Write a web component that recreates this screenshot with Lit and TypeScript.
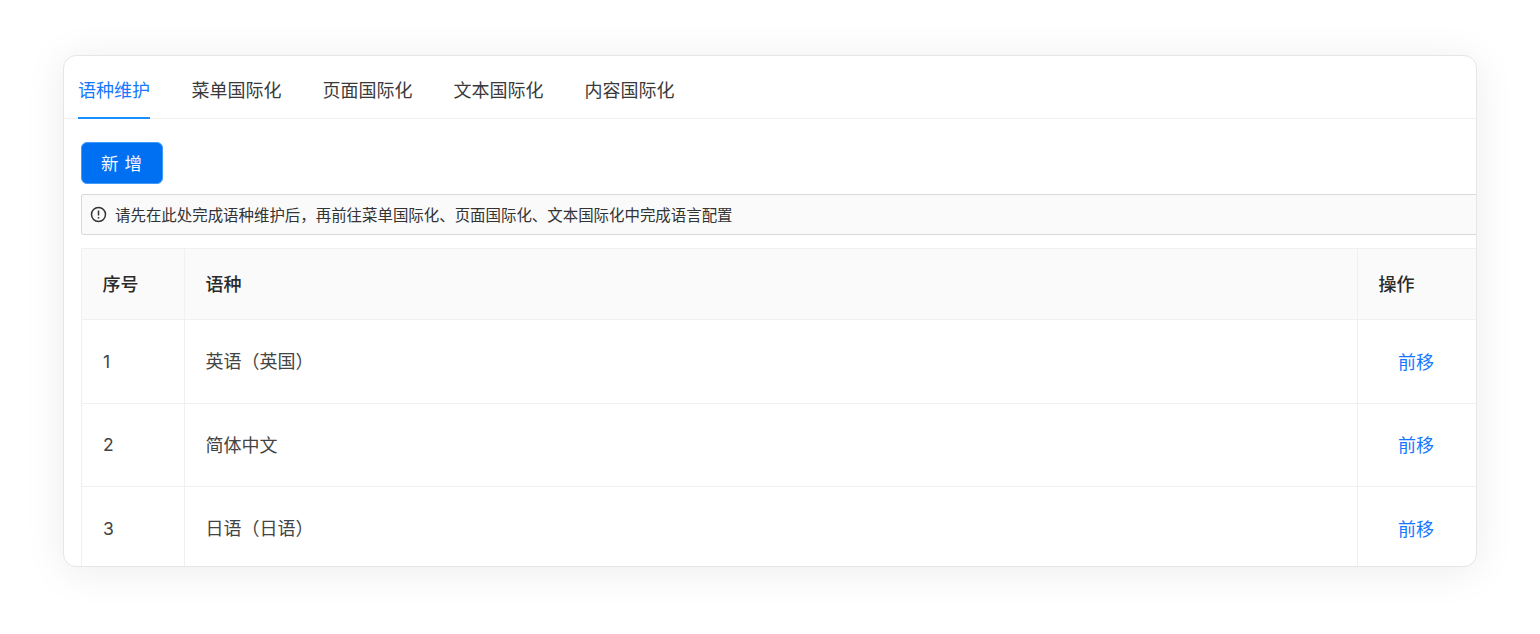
import { LitElement, html, css } from "lit";
import { customElement } from "lit/decorators.js";

@customElement("app-root")
export class AppRoot extends LitElement {
  static styles = css`
    :host {
      display: block;
      width: 1540px;
      height: 634px;
      background: #fff;
      box-sizing: border-box;
      padding: 55px 63px 67px 63px;
      font-family: "Noto Sans CJK SC", sans-serif;
      overflow: hidden;
    }
    .card {
      height: 512px;
      box-sizing: border-box;
      background: #fff;
      border: 1px solid #e6e6e6;
      border-radius: 13px;
      box-shadow: 0 4px 40px rgba(0, 0, 0, 0.08);
      overflow: hidden;
      display: flex;
      flex-direction: column;
    }
    .tabs {
      display: flex;
      gap: 41px;
      height: 63px;
      flex: none;
      box-sizing: border-box;
      padding-left: 14px;
      border-bottom: 1px solid #f0f0f0;
    }
    .tab {
      height: 63px;
      box-sizing: border-box;
      padding-top: 19px;
      line-height: 28px;
      font-size: 18px;
      color: #3a3a3a;
    }
    .tab.active {
      color: #1677ff;
      border-bottom: 2px solid #1890ff;
      margin-right: 0.5px;
    }
    .body {
      padding: 23px 0 0 17px;
      width: 1440px;
    }
    .btn {
      width: 82px;
      height: 42px;
      box-sizing: border-box;
      display: flex;
      align-items: center;
      justify-content: center;
      background: #0070f3;
      border: 1px solid #3f9bff;
      border-radius: 6px;
      color: #f2f7ff;
      font-size: 17.5px;
      line-height: 24px;
      letter-spacing: 6px;
      padding-left: 5px;
    }
    .alert {
      margin-top: 10px;
      height: 41px;
      box-sizing: border-box;
      display: flex;
      align-items: center;
      gap: 8px;
      padding-left: 8px;
      background: #fafafa;
      border: 1px solid #d9d9d9;
      border-radius: 2px;
      color: #333;
      font-size: 15.45px;
      line-height: 20px;
    }
    .alert svg {
      flex: none;
      display: block;
    }
    .alert span {
      padding-bottom: 2px;
    }
    .table {
      margin-top: 13px;
      border: 1px solid #f0f0f0;
      border-bottom: none;
      display: grid;
      grid-template-columns: 103px 1173px 1fr;
      grid-template-rows: 71px repeat(3, 83.6px);
      font-size: 18px;
      line-height: 24px;
      color: #444;
    }
    .cell {
      display: flex;
      align-items: center;
      box-sizing: border-box;
      padding-left: 20.6px;
      padding-bottom: 2px;
      border-bottom: 1px solid #f0f0f0;
      border-right: 1px solid #f0f0f0;
    }
    .cell:nth-child(3n) {
      border-right: none;
    }
    .head {
      background: #fafafa;
      color: #2a2a2a;
      font-weight: 500;
    }
    .num {
      font-family: Inter, sans-serif;
      font-size: 17.5px;
      padding-left: 21px;
      padding-top: 1px;
      padding-bottom: 0;
    }
    .act {
      color: #1677ff;
      padding-left: 40px;
      padding-bottom: 1px;
    }
  `;

  render() {
    const tabs = ["语种维护", "菜单国际化", "页面国际化", "文本国际化", "内容国际化"];
    const rows = [
      ["1", "英语（英国）"],
      ["2", "简体中文"],
      ["3", "日语（日语）"],
    ];
    return html`
      <div class="card">
        <div class="tabs">
          ${tabs.map((t, i) => html`<div class="tab ${i === 0 ? "active" : ""}">${t}</div>`)}
        </div>
        <div class="body">
          <div class="btn">新增</div>
          <div class="alert">
            <svg width="17" height="17" viewBox="0 0 17 17" fill="none" stroke="#333" stroke-width="1.5">
              <circle cx="8.5" cy="8.5" r="7" />
              <path d="M8.5 4.6v5" />
              <path d="M8.5 11v1.4" />
            </svg>
            <span>请先在此处完成语种维护后，再前往菜单国际化、页面国际化、文本国际化中完成语言配置</span>
          </div>
          <div class="table">
            <div class="cell head">序号</div>
            <div class="cell head">语种</div>
            <div class="cell head">操作</div>
            ${rows.map(
              (r) => html`
                <div class="cell num">${r[0]}</div>
                <div class="cell">${r[1]}</div>
                <div class="cell act">前移</div>
              `
            )}
          </div>
        </div>
      </div>
    `;
  }
}
